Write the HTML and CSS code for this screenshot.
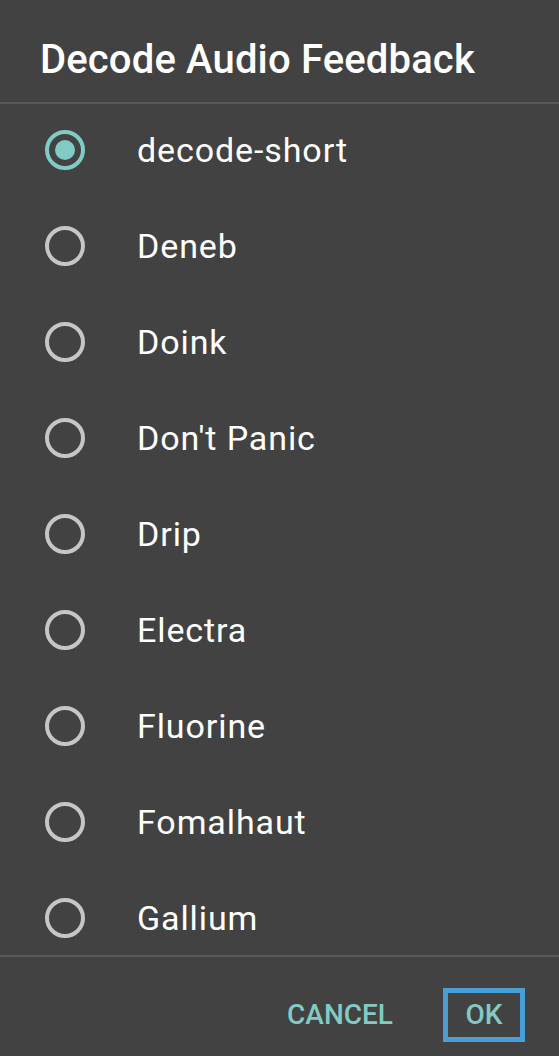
FILE: index.html
```html
<!DOCTYPE html>
<html>
<head>
<meta charset="utf-8">
<link rel="stylesheet" href="styles.css">
</head>
<body>
<div class="dialog">
  <div class="title">Decode Audio Feedback</div>
  <div class="divider"></div>
  <div class="list">
    <div class="row"><span class="radio checked"></span><span class="label">decode-short</span></div>
    <div class="row"><span class="radio"></span><span class="label">Deneb</span></div>
    <div class="row"><span class="radio"></span><span class="label">Doink</span></div>
    <div class="row"><span class="radio"></span><span class="label">Don't Panic</span></div>
    <div class="row"><span class="radio"></span><span class="label">Drip</span></div>
    <div class="row"><span class="radio"></span><span class="label">Electra</span></div>
    <div class="row"><span class="radio"></span><span class="label">Fluorine</span></div>
    <div class="row"><span class="radio"></span><span class="label">Fomalhaut</span></div>
    <div class="row"><span class="radio"></span><span class="label">Gallium</span></div>
  </div>
  <div class="divider"></div>
  <div class="buttons">
    <span class="btn">CANCEL</span>
    <span class="btn ok">OK</span>
  </div>
</div>
</body>
</html>
```
FILE: styles.css
```css
html, body {
  margin: 0;
  padding: 0;
  background: #424242;
}
.dialog {
  width: 559px;
  height: 1056px;
  display: flex;
  flex-direction: column;
  background: #424242;
  font-family: Roboto, "Noto Sans", sans-serif;
  color: #ffffff;
  overflow: hidden;
}
.title {
  height: 102px;
  box-sizing: border-box;
  padding: 35px 0 0 40px;
  font-size: 40px;
  font-weight: 500;
  line-height: 50px;
  letter-spacing: 0.15px;
  flex: none;
}
.divider {
  height: 2px;
  background: #595959;
  flex: none;
}
.list {
  height: 851px;
  overflow: hidden;
  flex: none;
}
.row {
  height: 96px;
  display: flex;
  align-items: center;
}
.radio {
  width: 32px;
  height: 32px;
  border: 4px solid #c6c6c6;
  border-radius: 50%;
  margin-left: 45px;
  margin-right: 52px;
  margin-top: -4px;
  display: flex;
  align-items: center;
  justify-content: center;
  flex: none;
}
.radio.checked {
  border-color: #80cbc4;
}
.radio.checked::after {
  content: "";
  width: 20px;
  height: 20px;
  border-radius: 50%;
  background: #80cbc4;
}
.label {
  font-size: 34px;
  line-height: 40px;
  letter-spacing: 0.9px;
  margin-top: -4px;
}
.buttons {
  flex: 1;
  display: flex;
  justify-content: flex-end;
  align-items: center;
  padding: 16px 34px 0 0;
  gap: 50px;
}
.btn {
  font-size: 28px;
  font-weight: 500;
  color: #80cbc4;
  line-height: 44px;
}
.btn.ok {
  border: 5px solid #4a9fd4;
  padding: 0 16px;
  width: 40px;
  text-align: center;
}
```
